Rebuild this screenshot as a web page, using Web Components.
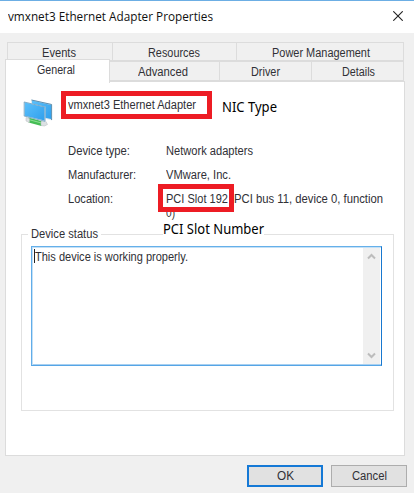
<!DOCTYPE html>
<html lang="en"><head><meta charset="utf-8"><title>vmxnet3 Ethernet Adapter Properties</title>
<style>html,body{margin:0;width:414px;height:493px;overflow:hidden;background:#f0f0f0}</style></head>
<body><properties-dialog></properties-dialog>
<script>
const define = (name, html, ready) => customElements.define(name, class extends HTMLElement {
  connectedCallback() {
    if (this.shadowRoot) return;
    this.attachShadow({mode: 'open'}).innerHTML = html;
    if (ready) ready.call(this, this.shadowRoot);
  }
});

// A single line of text condensed or widened to the width given in "w".
define('fit-text', `<style>
:host{display:block;height:16px;line-height:16px;white-space:pre;flex:none}
span{display:inline-block;transform-origin:0 0}</style><span><slot></slot></span>`,
function (root) {
  const w = +this.getAttribute('w'), s = root.querySelector('span');
  this.style.width = w + 'px';
  s.style.transform = `scaleX(${w / s.getBoundingClientRect().width})`;
});

define('title-bar', `<style>
:host{display:flex;justify-content:space-between;box-sizing:border-box;height:33px;padding:8px 11px 0 8px;background:#fff;border-top:1px solid #6caee4;font:12px/16px "Open Sans","Noto Sans",sans-serif;color:#111}
svg{margin-top:2px}</style><slot></slot>
<svg width="10" height="10" viewBox="0 0 10 10"><path d="M.3.3l9.4 9.4M9.7.3L.3 9.7" stroke="#222" stroke-width="1.1"/></svg>`);

define('tab-item', `<style>
:host{display:block;box-sizing:border-box;border:1px solid #dcdcdc;border-left-width:0;background:#f0f0f0}
:host([first]){border-left-width:1px}
:host([active]){background:#fff;border-left-width:1px;border-bottom:0;margin-top:-2px;position:relative}</style><slot></slot>`,
function () { this.style.width = this.getAttribute('w') + 'px'; this.style.padding = this.getAttribute('pad'); });

define('tab-strip', `<style>
:host{display:block;padding:9px 0 0 5px}
.row{display:flex}.back{margin-left:2px;height:19px}.front{height:20px}
.front tab-item:not([active]){height:20px}.front tab-item[active]{height:24px}</style>
<div class="row back">
<tab-item first w="106" pad="2px 0 0 34px"><fit-text w="34">Events</fit-text></tab-item>
<tab-item w="124" pad="2px 0 0 35px"><fit-text w="52">Resources</fit-text></tab-item>
<tab-item w="167" pad="2px 0 0 35px"><fit-text w="98">Power Management</fit-text></tab-item></div>
<div class="row front">
<tab-item active w="105" pad="2px 0 0 31px"><fit-text w="38">General</fit-text></tab-item>
<tab-item w="110" pad="2px 0 0 28px"><fit-text w="50">Advanced</fit-text></tab-item>
<tab-item w="92" pad="2px 0 0 31px"><fit-text w="29">Driver</fit-text></tab-item>
<tab-item w="92" pad="2px 0 0 30px"><fit-text w="33">Details</fit-text></tab-item></div>`);

define('adapter-icon', `<style>:host{display:block;width:32px;height:30px;flex:none}</style>
<svg width="32" height="30" viewBox="0 0 32 30">
<defs><linearGradient id="g" x2="1" y2="1"><stop stop-color="#5cc0fb"/><stop offset="1" stop-color="#2f9fec"/></linearGradient></defs>
<path d="M8 .5L29 5v16.500L8 16z" fill="#dfe9ef"/><path d="M9 1.500L28 6v14L9 16z" fill="url(#g)"/><path d="M8.500 1L28.600 5.500v15.500" fill="none" stroke="#4a82a8" stroke-width=".9"/>
<path d="M5.500 18l13 4v5l-13-3.500z" fill="#45bd55"/><path d="M5.500 20l13 3.500v1L5.500 21z" fill="#8cdf92"/><path d="M3 18.500l3.500 1v4L3 22zM18 22.500l5 0 1.500 3-3 1.500-3.500-.5z" fill="#dce1e3" stroke="#b4bbbe" stroke-width=".5"/>
<path d="M.8 2.500L22.500 7.700v15.300L.8 17.500z" fill="#e1ebf1"/><path d="M1.800 3.500L21.500 8.300v13.200L1.800 16.700z" fill="url(#g)"/><path d="M1.200 3L22 8v14.300L1.200 17z" fill="none" stroke="#5c94b8" stroke-width=".7"/></svg>`);

define('info-row', `<style>:host{display:flex;padding-left:62px;height:24px}.k{width:98px}</style>
<div class="k"><slot name="label"></slot></div><div><slot></slot></div>`);

define('scroll-rail', `<style>:host{display:flex;flex-direction:column;justify-content:space-between;width:17px;box-sizing:border-box;padding:4px 4px;background:#f0f0f0}</style>
<svg width="9" height="9" viewBox="0 0 9 9"><path d="M1 6.5L4.5 3 8 6.5" fill="none" stroke="#bcbcbc" stroke-width="2"/></svg>
<svg width="9" height="9" viewBox="0 0 9 9"><path d="M1 2.5L4.5 6 8 2.5" fill="none" stroke="#bcbcbc" stroke-width="2"/></svg>`);

define('status-box', `<style>
:host{display:flex;justify-content:space-between;box-sizing:border-box;width:351px;height:120px;border:1px solid;border-color:#65b0ea #1878cf #55a5e6 #61ade9;box-shadow:inset 0 1px #c4e0f6,inset 1px 0 #c4e0f6,inset 0 -1px #a8d0f1;padding:1px;background:#fff}
.t{display:flex;padding:1px 0 0 1px}.c{width:1px;height:14px;background:#222}</style>
<div class="t"><i class="c"></i><slot></slot></div><scroll-rail></scroll-rail>`);

define('group-box', `<style>
:host{display:block;box-sizing:border-box;width:373px;height:177px;border:1px solid #e2e2e2;margin-left:15px}
.l{width:70px;margin:-9px 0 0 6px;padding-left:3px;background:#fff}.b{padding:4px 0 0 9px}</style>
<div class="l"><slot name="label"></slot></div><div class="b"><slot></slot></div>`);

define('push-button', `<style>
:host{display:flex;justify-content:center;box-sizing:border-box;width:76px;height:22px;padding-top:2px;background:#e1e1e1;border:1px solid #adadad}
:host([primary]){border:2px solid #1579d6;padding-top:1px}</style><slot></slot>`);

// Red outline laid over a value.
define('mark-box', `<style>:host{position:absolute;box-sizing:border-box;border:5px solid #ed1c24}</style>`);
define('mark-note', `<style>:host{position:absolute;font:13.5px/16px "Noto Sans","Open Sans",sans-serif;color:#000;background:#fff}</style><slot></slot>`);

define('properties-dialog', `<style>
:host{display:block;position:relative;width:414px;height:493px;background:#f0f0f0;font:12px/16px "Liberation Sans",Arial,sans-serif;color:#303036;overflow:hidden}
.panel{box-sizing:border-box;width:400px;height:375px;margin-left:5px;border:1px solid #dcdcdc;background:#fff}
.head{display:flex;padding:15px 0 0 17px;height:61px;box-sizing:border-box}
.head fit-text{margin-left:13px}.head adapter-icon{margin-top:2px}
.rows{height:91px}
.loc{display:flex;gap:3px}.loc2{margin-top:-2px}
.foot{display:flex;justify-content:flex-end;gap:8px;padding:9px 7px 0 0}
.b1{left:61px;top:91px;width:151px;height:28px}.b2{left:158px;top:184px;width:76px;height:28px}
.n1{left:222px;top:99px}.n2{left:163px;top:221px}
</style>
<title-bar><fit-text w="205">vmxnet3 Ethernet Adapter Properties</fit-text></title-bar>
<tab-strip></tab-strip>
<div class="panel">
<div class="head"><adapter-icon></adapter-icon><fit-text w="128">vmxnet3 Ethernet Adapter</fit-text></div>
<div class="rows">
<info-row><fit-text slot="label" w="62">Device type:</fit-text><fit-text w="87">Network adapters</fit-text></info-row>
<info-row><fit-text slot="label" w="68">Manufacturer:</fit-text><fit-text w="65">VMware, Inc.</fit-text></info-row>
<info-row><fit-text slot="label" w="45">Location:</fit-text><div class="loc"><fit-text w="65">PCI Slot 192 </fit-text><fit-text w="149">PCI bus 11, device 0, function</fit-text></div><fit-text class="loc2" w="9">0)</fit-text></info-row>
</div>
<group-box><fit-text slot="label" w="67">Device status</fit-text>
<status-box><fit-text w="153">This device is working properly.</fit-text></status-box></group-box>
</div>
<div class="foot"><push-button primary><fit-text w="17">OK</fit-text></push-button><push-button><fit-text w="35">Cancel</fit-text></push-button></div>
<mark-box class="b1"></mark-box><mark-box class="b2"></mark-box>
<mark-note class="n1"><fit-text w="55">NIC Type</fit-text></mark-note>
<mark-note class="n2"><fit-text w="101">PCI Slot Number</fit-text></mark-note>`);
</script></body></html>
